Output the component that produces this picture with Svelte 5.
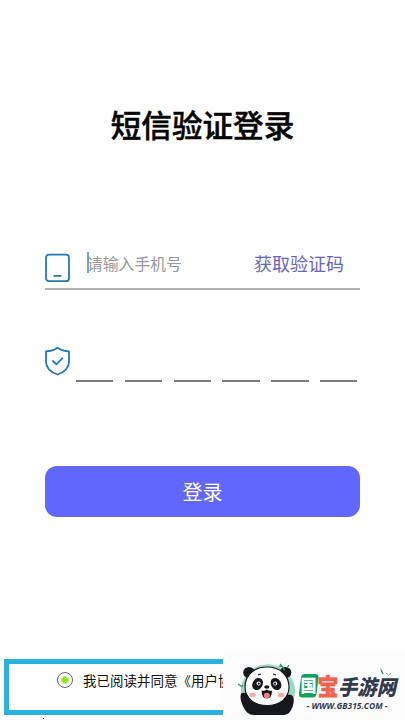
<script>
  let phone = '';
  let agreed = true;
  const digits = [0, 1, 2, 3, 4, 5];
</script>

<main class="page">
  <h1>短信验证登录</h1>

  <div class="phone-row">
    <svg class="phone-icon" width="25" height="30" viewBox="0 0 25 30">
      <rect x="1" y="1.6" width="23" height="26.6" rx="3" />
      <path d="M9.2 22.8h6.4" />
    </svg>
    <span class="cursor"></span>
    <input type="text" placeholder="请输入手机号" bind:value={phone} />
    <button class="send">获取验证码</button>
  </div>

  <div class="code-row">
    <svg class="shield-icon" width="25" height="30" viewBox="0 0 25 30">
      <path d="M12.5 1.8C9.3 4.1 5.5 5.200 1 5.400v10c0 6.400 4.500 10.600 11.500 13.100C19.500 26 24 21.800 24 15.400v-10C19.500 5.200 15.700 4.100 12.500 1.800z" />
      <path d="M8 15l3.400 3.400 5.900-6.100" />
    </svg>
    <div class="digits">
      {#each digits as digit}
        <span class="digit"></span>
      {/each}
    </div>
  </div>

  <button class="login">登录</button>

  <div class="agreement">
    <span class="radio" class:checked={agreed}></span>
    <span class="agreement-text">我已阅读并同意《用户协议》</span>
  </div>
  <span class="speck"></span>

  <div class="brand">
    <svg width="182" height="68" viewBox="223 652 182 68">
      <!-- panda badge -->
      <path d="M246 706a27 26.500 0 1 1 44 0z" fill="#9bdcc0" />
      <g fill="#17181c">
        <ellipse cx="249" cy="672.500" rx="5.800" ry="5.600" />
        <ellipse cx="285.500" cy="672.500" rx="5.800" ry="5.600" />
        <path d="M242 693c4-1 6 5 9 8h32c2-5 4-7 8-6 4 1 3 9 1 13-2 5-5 7-9 7h-29c-5 0-8-3-10-7-3-5-5-13-2-15z" />
      </g>
      <path d="M267 667c13.500 0 22 8.500 22 20 0 11-9 18.500-22 18.500s-22-7.500-22-18.500c0-11.500 8.500-20 22-20z" fill="#fff" stroke="#17181c" stroke-width="1.200" />
      <g fill="#17181c">
        <path d="M242 693c3-1 6 1 7 5l5 6-6 3c-5-2-9-12-6-14z" />
        <path d="M291 695c-3-1-6 1-7 5l-4 4 6 3c5-1 9-10 5-12z" />
        <ellipse cx="257.600" cy="684" rx="5" ry="6.400" transform="rotate(30 257.600 684)" />
        <ellipse cx="276" cy="684" rx="5" ry="6.400" transform="rotate(-30 276 684)" />
        <ellipse cx="266.800" cy="687" rx="2.600" ry="1.700" />
      </g>
      <circle cx="258.600" cy="683.500" r="2" fill="#fff" />
      <circle cx="275.200" cy="683.500" r="2" fill="#fff" />
      <circle cx="258.800" cy="683.700" r="1.100" fill="#17181c" />
      <circle cx="275" cy="683.700" r="1.100" fill="#17181c" />
      <path d="M258 675l3-1M273 674l3 1" stroke="#17181c" stroke-width="1.300" />
      <path d="M261.600 690.500q2.700 1 5.200-1 2.500 2 5.200 1 0 8-5.200 8t-5.200-8z" fill="#17181c" />
      <ellipse cx="266.800" cy="695.400" rx="3" ry="2.600" fill="#f4817d" />
      <ellipse cx="252.500" cy="695" rx="3.400" ry="2.200" fill="#f9aaa5" />
      <ellipse cx="281" cy="695" rx="3.400" ry="2.200" fill="#f9aaa5" />
      <path d="M279 666l4 1 1 3M280 664l5 6M287 668l2-3M238 684l3 2M241 687l2-2" fill="none" stroke="#26875c" stroke-width="1.200" />
      <!-- bamboo leaves above the name -->
      <path d="M380.500 668l3 5-.5 1.500q-2.500-2-2.500-6.500z" fill="#2b9a6a" />
      <path d="M386 673l2.500 2M389.500 675l1.500-2" stroke="#8e9c97" />
      <path d="M304.500 674h10.500q4 0 3.500 4l-2 16q-.5 3.500-4 3.500H302q-3.500 0-3-4l2-16q.5-3.500 3.500-3.500z" fill="#10a35c" />
      <text class="guo" x="300.500" y="692" textLength="16" lengthAdjust="spacingAndGlyphs">国</text>
      <text class="bao" x="317.500" y="694.500" textLength="21" lengthAdjust="spacingAndGlyphs">宝</text>
      <text class="name" x="338" y="695" textLength="58" lengthAdjust="spacingAndGlyphs">手游网</text>
      <text class="url" x="306.500" y="709" textLength="81" lengthAdjust="spacingAndGlyphs">- WWW.GB315.COM -</text>
    </svg>
  </div>
</main>

<style>
  :global(body) {
    margin: 0;
    background: #fff;
  }
  .page {
    position: relative;
    box-sizing: border-box;
    width: 405px;
    height: 720px;
    padding: 104px 45px 0;
    overflow: hidden;
    background: #fff;
    font-family: 'Noto Sans CJK SC', sans-serif;
  }
  h1 {
    margin: 0;
    color: #050505;
    font-size: 30.600px;
    font-weight: 500;
    line-height: 40px;
    text-align: center;
    white-space: nowrap;
    -webkit-text-stroke: 0.500px #050505;
  }
  button {
    padding: 0;
    border: 0;
    font-family: inherit;
  }
  svg {
    display: block;
    flex: none;
  }
  .phone-icon,
  .shield-icon {
    fill: none;
    stroke: #2479b5;
    stroke-width: 1.800;
    stroke-linecap: round;
    stroke-linejoin: round;
  }
  .phone-row {
    display: flex;
    box-sizing: border-box;
    height: 41px;
    margin-top: 105px;
    border-bottom: 2px solid #b3afb3;
  }
  .phone-icon {
    margin-top: 4px;
  }
  .cursor {
    flex: none;
    width: 2px;
    height: 21px;
    margin: 3px -2px 0 17px;
    background: #65add0;
  }
  input {
    width: 150px;
    height: 28px;
    padding: 0;
    border: 0;
    outline: 0;
    background: transparent;
    font-family: inherit;
    font-size: 15.800px;
  }
  input::placeholder {
    color: #999;
    opacity: 1;
  }
  .send {
    height: 28px;
    margin-left: 17px;
    background: none;
    color: #6966be;
    font-size: 18px;
    line-height: 28px;
    white-space: nowrap;
  }
  .code-row {
    display: flex;
    height: 36px;
    margin-top: 56px;
  }
  .digits {
    display: flex;
    align-items: flex-end;
    gap: 11.400px;
    margin-left: 6px;
  }
  .digit {
    width: 37.400px;
    height: 2px;
    background: #7d797d;
  }
  .login {
    display: block;
    width: 315px;
    height: 51px;
    margin-top: 84px;
    border-radius: 12px;
    background: #6268ff;
    color: #fff;
    font-size: 20px;
    line-height: 51px;
  }
  .agreement {
    display: flex;
    box-sizing: border-box;
    width: 320px;
    height: 56px;
    margin: 142px 0 0 -41px;
    padding: 5px 0 0 48px;
    border: 5px solid #29b2df;
    white-space: nowrap;
  }
  .radio {
    flex: none;
    box-sizing: border-box;
    width: 16px;
    height: 16px;
    margin-top: 3px;
    border: 1px solid #666;
    border-radius: 50%;
  }
  .radio.checked {
    background: radial-gradient(circle, #8ee52b 0 2.500px, #b8f274 3.500px, #fff 4.500px);
  }
  .agreement-text {
    margin-left: 10px;
    color: #111;
    font-size: 13.500px;
    line-height: 22px;
  }
  .speck {
    position: absolute;
    left: 43px;
    top: 718px;
    width: 1px;
    height: 1px;
    background: #222;
  }
  .brand {
    position: absolute;
    top: 652px;
    left: 223px;
    background: #fcfcfc;
  }
  .guo,
  .bao,
  .name {
    font-weight: 900;
  }
  .guo {
    fill: #fff;
    font-size: 17px;
  }
  .bao {
    fill: #f4614f;
    stroke: #f4614f;
    stroke-width: 0.600;
    font-size: 23px;
  }
  .name {
    fill: #343a4e;
    font-size: 21px;
    font-style: italic;
  }
  .url {
    fill: #343a4e;
    font-family: 'Open Sans', sans-serif;
    font-size: 8.500px;
    font-style: italic;
    font-weight: 700;
  }
</style>
